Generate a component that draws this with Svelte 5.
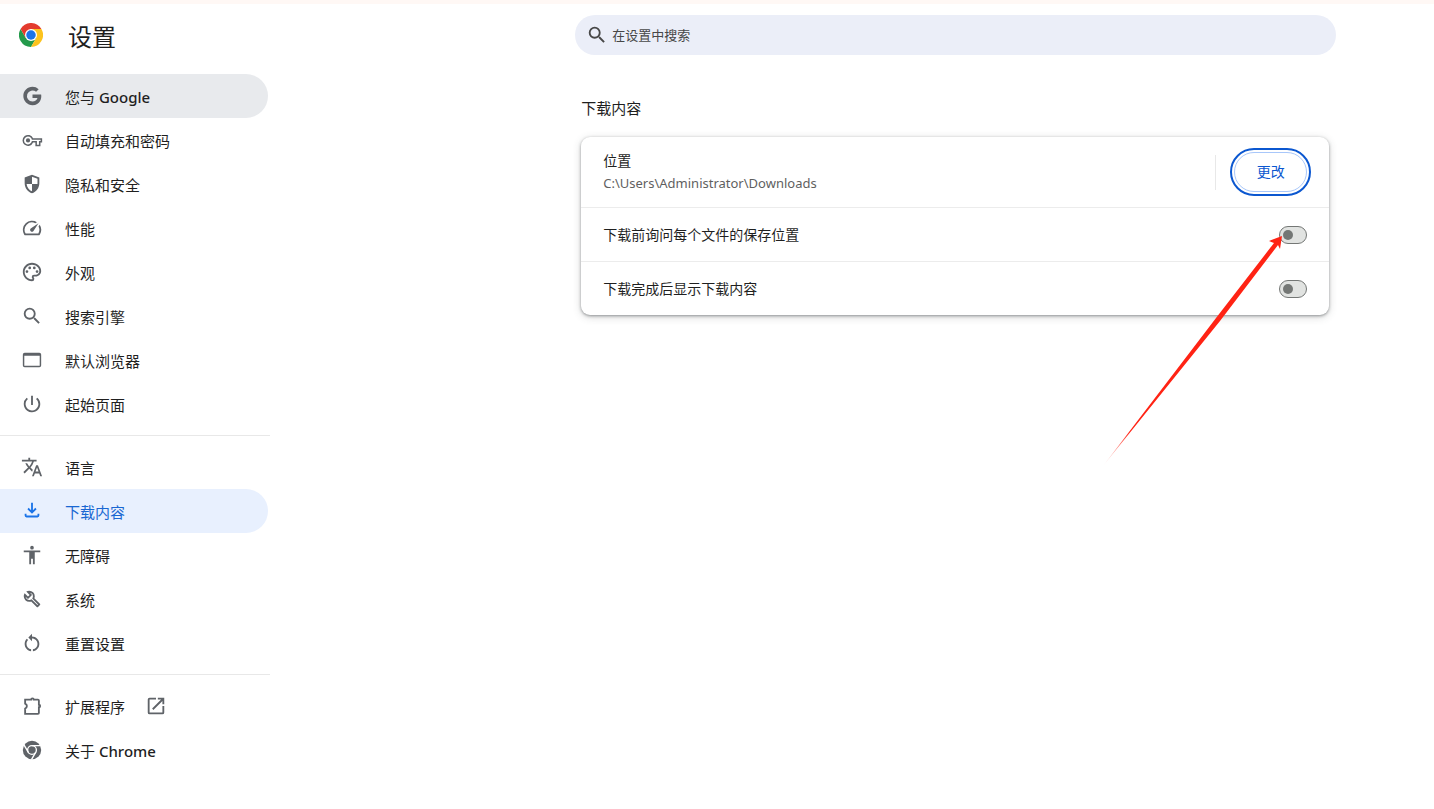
<script lang="ts">
    type Item = { label: string, latin?: string, icon: string, state?: 'hover' | 'selected', external?: boolean }

    const icons: Record<string, string> = {
        google: 'M12.545 10.239v3.821h5.445c-.712 2.315-2.647 3.972-5.445 3.972a6.032 6.032 0 1 1 3.921-10.611l2.814-2.814A9.969 9.969 0 0 0 12.545 2C7.021 2 2.543 6.477 2.543 12s4.478 10 10.002 10c8.396 0 10.249-7.850 9.426-11.748z',
        key: 'M22 18.500h-6V14h-2.700a6.500 6.500 0 1 1 0-5H24v5h-2zm-1.800-1.800V12.300h2V10.800H11.900A4.700 4.700 0 1 0 11.900 12.300H17.800v4.400zM7.300 9a2.500 2.500 0 1 1 0 5 2.500 2.500 0 0 1 0-5z',
        shield: 'M12 2l8 3v6.100c0 5-3.400 9.700-8 10.900-4.600-1.200-8-5.900-8-10.900V5zM12 4.200V12h5.900q.1-.5.1-.9V6.400zM12 12H6.100c.5 3.700 2.800 6.800 5.900 7.900z',
        speed: 'M20.380 8.570l-1.230 1.850a8 8 0 0 1-.22 7.580H5.070A8 8 0 0 1 15.580 6.850l1.850-1.230A10 10 0 0 0 3.350 19a2 2 0 0 0 1.720 1h13.850a2 2 0 0 0 1.740-1 10 10 0 0 0-.27-10.440zm-9.790 6.840a2 2 0 0 0 2.830 0l5.660-8.490-8.490 5.660a2 2 0 0 0 0 2.830z',
        palette: 'M12 22C6.490 22 2 17.510 2 12S6.490 2 12 2s10 4.040 10 9c0 3.310-2.690 6-6 6h-1.770c-.28 0-.5.22-.5.5 0 .12.05.23.13.33.41.47.64 1.060.64 1.670A2.500 2.500 0 0 1 12 22zm0-18c-4.410 0-8 3.590-8 8s3.590 8 8 8c.28 0 .5-.22.5-.5a.54.54 0 0 0-.14-.35c-.41-.46-.63-1.050-.63-1.650a2.500 2.500 0 0 1 2.500-2.500H16c2.210 0 4-1.790 4-4 0-3.860-3.590-7-8-7zM6.500 10a1.500 1.500 0 1 1 0 3 1.500 1.500 0 0 1 0-3zM9.500 6a1.500 1.500 0 1 1 0 3 1.500 1.500 0 0 1 0-3zM14.500 6a1.500 1.500 0 1 1 0 3 1.500 1.500 0 0 1 0-3zM17.500 10a1.500 1.500 0 1 1 0 3 1.500 1.500 0 0 1 0-3z',
        search: 'M15.500 14h-.79l-.28-.27A6.470 6.470 0 0 0 16 9.500 6.500 6.500 0 1 0 9.500 16c1.610 0 3.090-.59 4.230-1.570l.27.28v.79l5 4.990L20.490 19l-4.990-5zm-6 0C7.010 14 5 11.990 5 9.500S7.010 5 9.500 5 14 7.010 14 9.500 11.990 14 9.500 14z',
        browser: 'M20 4H4a2 2 0 0 0-2 2v12a2 2 0 0 0 2 2h16a2 2 0 0 0 2-2V6a2 2 0 0 0-2-2zm.4 14.400H3.600V7.300h16.800z',
        power: 'M13 3h-2v10h2V3zm4.830 2.170l-1.420 1.420A6.920 6.920 0 0 1 19 12a7 7 0 1 1-11.420-5.420L6.170 5.170A8.930 8.930 0 0 0 3 12a9 9 0 1 0 14.830-6.830z',
        translate: 'M12.870 15.070l-2.540-2.510.03-.03A17.520 17.520 0 0 0 14.070 6H17V4h-7V2H8v2H1v2h11.170C11.500 7.920 10.440 9.750 9 11.350 8.070 10.320 7.300 9.190 6.690 8h-2c.73 1.630 1.730 3.170 2.980 4.560l-5.090 5.020L4 19l5-5 3.110 3.110.76-2.040zM18.500 10h-2L12 22h2l1.120-3h4.750L21 22h2l-4.500-12zm-2.620 7l1.620-4.330L19.120 17h-3.240z',
        download: 'M12 15l-5-5 1.400-1.450 2.600 2.600V3h2v8.150l2.600-2.600L17 10zM6 19a2 2 0 0 1-2-2v-2h2v2h12v-2h2v2a2 2 0 0 1-2 2z',
        accessibility: 'M12 2a2 2 0 1 1 0 4 2 2 0 0 1 0-4zM21 9h-6v13h-2v-6h-2v6H9V9H3V7h18v2z',
        wrench: 'M686-132 444-376q-20 8-40.500 12t-43.500 4q-100 0-170-70t-70-170q0-36 10-68.500t28-61.500l146 146 72-72-146-146q29-18 61.500-28t68.500-10q100 0 170 70t70 170q0 23-4 43.500T584-516l244 242q12 12 12 29t-12 29l-84 84q-12 12-29 12t-29-12Zm29-85 27-27-256-256q18-20 26-46.500t8-53.500q0-60-38.500-104.500T386-758l74 74q12 12 12 28t-12 28L332-500q-12 12-28 12t-28-12l-74-74q9 57 53.500 95.500T360-440q26 0 53-8t47-25l255 256Z',
        reset: 'M12 5V2L8 6l4 4V7c3.310 0 6 2.690 6 6 0 2.970-2.170 5.430-5 5.910v2.020c3.950-.49 7-3.850 7-7.930 0-4.420-3.580-8-8-8zm-6 8c0-1.650.67-3.150 1.760-4.240L6.340 7.340C4.900 8.790 4 10.790 4 13c0 4.080 3.050 7.440 7 7.930v-2.020c-2.830-.48-5-2.940-5-5.910z',
        extension: 'M19.500 10V6a1 1 0 0 0-1-1h-4.600a1.400 1.400 0 0 0-2.800 0H4.500v4.300a3 3 0 0 1 0 5.600V20.500h14a1 1 0 0 0 1-1V13.400a1.400 1.400 0 0 0 0-2.800z',
        external: 'M19 19H5V5h7V3H5a2 2 0 0 0-2 2v14a2 2 0 0 0 2 2h14a2 2 0 0 0 2-2v-7h-2v7zM14 3v2h3.590l-9.830 9.830 1.410 1.410L19 6.410V10h2V3h-7z',
    }

    // icons drawn on another grid than 24x24
    const viewBoxes: Record<string, string> = {
        key: '-1 -2 26 26',
        wrench: '0 -960 960 960',
    }

    const groups: Item[][] = [
        [
            {label: '您与', latin: 'Google', icon: 'google', state: 'hover'},
            {label: '自动填充和密码', icon: 'key'},
            {label: '隐私和安全', icon: 'shield'},
            {label: '性能', icon: 'speed'},
            {label: '外观', icon: 'palette'},
            {label: '搜索引擎', icon: 'search'},
            {label: '默认浏览器', icon: 'browser'},
            {label: '起始页面', icon: 'power'},
        ],
        [
            {label: '语言', icon: 'translate'},
            {label: '下载内容', icon: 'download', state: 'selected'},
            {label: '无障碍', icon: 'accessibility'},
            {label: '系统', icon: 'wrench'},
            {label: '重置设置', icon: 'reset'},
        ],
        [
            {label: '扩展程序', icon: 'extension', external: true},
            {label: '关于', latin: 'Chrome', icon: 'chrome'},
        ],
    ]

    let query = $state('')
    let askLocation = $state(false)
    let showWhenDone = $state(false)
</script>

<div class="page">
    <aside>
        <header>
            <svg class="logo" viewBox="0 0 48 48" aria-hidden="true">
                <path fill="#249a4b" d="M3.200 12A24 24 0 0 0 24 48l10.400-18H13.600z"/>
                <path fill="#fcc31e" d="M24 12h20.800A24 24 0 0 1 24 48l10.400-18z"/>
                <path fill="#e33b2e" d="M3.200 12A24 24 0 0 1 44.800 12H24L13.600 30z"/>
                <circle cx="24" cy="24" r="12" fill="#fff"/>
                <circle cx="24" cy="24" r="9.500" fill="#1a73e8"/>
            </svg>
            <h1>设置</h1>
        </header>
        <nav>
            {#each groups as group}
                <ul>
                    {#each group as item}
                        <li>
                            <a href="#{item.icon}" class={item.state}>
                                <svg class="icon" viewBox={viewBoxes[item.icon] || '0 0 24 24'} aria-hidden="true">
                                    {#if item.icon === 'chrome'}
                                        <circle cx="12" cy="12" r="10"/>
                                        <g fill="none" stroke="#fff" stroke-width="1.500">
                                            <circle cx="12" cy="12" r="4.800"/>
                                            <path d="M12 7.200h9.500M7.840 14.400L3.100 6.200M16.160 14.400L11.400 22.600"/>
                                        </g>
                                    {:else}
                                        <path class:outline={item.icon === 'extension'} fill-rule="evenodd" d={icons[item.icon]}/>
                                    {/if}
                                </svg>
                                <span>{item.label}{#if item.latin}{' '}<b>{item.latin}</b>{/if}</span>
                                {#if item.external}
                                    <svg class="icon" viewBox="0 0 24 24" aria-hidden="true"><path d={icons.external}/></svg>
                                {/if}
                            </a>
                        </li>
                    {/each}
                </ul>
            {/each}
        </nav>
    </aside>

    <main>
        <label class="search">
            <svg class="icon" viewBox="0 0 24 24" aria-hidden="true"><path d={icons.search}/></svg>
            <input type="search" placeholder="在设置中搜索" aria-label="在设置中搜索" bind:value={query}>
        </label>

        <section>
            <h2>下载内容</h2>
            <div class="card">
                <div class="row location">
                    <div class="text">
                        <div>位置</div>
                        <div class="secondary">C:\Users\Administrator\Downloads</div>
                    </div>
                    <div class="action">
                        <button>更改</button>
                    </div>
                </div>
                <label class="row">
                    <span class="text">下载前询问每个文件的保存位置</span>
                    <input type="checkbox" role="switch" bind:checked={askLocation}>
                </label>
                <label class="row">
                    <span class="text">下载完成后显示下载内容</span>
                    <input type="checkbox" role="switch" bind:checked={showWhenDone}>
                </label>

                <svg class="pointer" viewBox="0 0 180 232" aria-hidden="true">
                    <defs>
                        <linearGradient id="tail" x1="0" y1="1" x2="1" y2="0">
                            <stop offset="0" stop-color="#ff2314" stop-opacity="0"/>
                            <stop offset="0.150" stop-color="#ff2314"/>
                        </linearGradient>
                    </defs>
                    <path fill="url(#tail)" d="M0 231L113 83 171 8l-5-2L179 1l-2 13-2-4L117 86z"/>
                </svg>
            </div>
        </section>
    </main>
</div>

<style>
    :global(body) {
        background: #fff;
    }

    .page {
        display: grid;
        grid-template-columns: 33.3% 1fr;
        border-top: 4px solid #fff8f5;
        color: #1f1f1f;
        font-family: "Noto Sans", "Noto Sans CJK SC", sans-serif;
        font-size: 14px;
        line-height: 20px;
    }

    aside {
        width: 270px;
    }

    header {
        display: flex;
        align-items: center;
        gap: 25px;
        height: 62px;
        padding: 0 19px 8px;
    }

    .logo {
        width: 24px;
        height: 24px;
    }

    h1 {
        margin: 4px 0 0;
        font-size: 24px;
        font-weight: 400;
        line-height: 32px;
    }

    ul {
        margin: 0;
        padding: 0;
        list-style: none;
    }

    ul + ul {
        margin-top: 9px;
        padding-top: 9px;
        border-top: 1px solid #e8e8e8;
    }

    nav a {
        display: flex;
        align-items: center;
        height: 44px;
        margin-right: 2px;
        padding-left: 21px;
        border-radius: 0 22px 22px 0;
        color: #1f1f1f;
        font-size: 15px;
        text-decoration: none;
    }

    nav span {
        margin: 1px 20px 0 22px;
    }

    nav b {
        font-weight: 500;
    }

    .hover {
        background: #e8eaed;
    }

    .selected {
        background: #e8f0fe;
        color: #1967d2;
    }

    .icon {
        flex: none;
        width: 22px;
        height: 22px;
        fill: #5f6368;
    }

    .selected .icon {
        fill: #1a73e8;
    }

    .outline {
        fill: none;
        stroke: #5f6368;
        stroke-width: 2;
    }

    main {
        width: 761px;
        max-width: 100%;
        justify-self: center;
    }

    .search {
        display: flex;
        align-items: center;
        gap: 4px;
        height: 40px;
        margin-top: 11px;
        padding: 0 11px;
        border-radius: 20px;
        background: #ebeef8;
    }

    .search .icon {
        fill: #474747;
    }

    .search input {
        flex: 1;
        padding: 0;
        border: none;
        outline: none;
        background: none;
        font: inherit;
        font-size: 13px;
    }

    .search input::placeholder {
        color: #474747;
        opacity: 1;
    }

    section {
        padding: 0 7px 0 6px;
    }

    h2 {
        margin: 43px 0 19px;
        font-size: 15px;
        font-weight: 400;
        line-height: 20px;
    }

    .card {
        position: relative;
        border-radius: 9px;
        background: #fff;
        box-shadow: 0 1px 3px rgba(60, 64, 67, .5), 0 2px 8px rgba(60, 64, 67, .2);
    }

    .row {
        display: flex;
        align-items: center;
        min-height: 53px;
        padding: 0 22px;
    }

    .row + .row {
        border-top: 1px solid #ececec;
    }

    .location {
        min-height: 70px;
    }

    .text {
        flex: 1;
    }

    .secondary {
        margin-top: 2px;
        color: #5f5f5f;
        font-size: 13px;
    }

    .action {
        display: flex;
        align-items: center;
    }

    .action::before {
        content: "";
        width: 1px;
        height: 35px;
        margin-right: 18px;
        background: #e8e8e8;
    }

    button {
        min-width: 73px;
        height: 40px;
        padding: 0 20px;
        border: 1px solid #a8c7fa;
        border-radius: 20px;
        outline: 2px solid #0b57d0;
        outline-offset: 2px;
        background: #fff;
        color: #0b57d0;
        font: inherit;
    }

    input[type="checkbox"] {
        appearance: none;
        display: flex;
        align-items: center;
        width: 28px;
        height: 18px;
        margin: 0;
        padding: 0 3px;
        box-sizing: border-box;
        border: 1px solid #747775;
        border-radius: 9px;
        background: #e1e3e1;
    }

    input[type="checkbox"]::before {
        content: "";
        width: 10px;
        height: 10px;
        border-radius: 50%;
        background: #747775;
    }

    input[type="checkbox"]:checked {
        justify-content: flex-end;
        background: #a8c7fa;
    }

    .pointer {
        position: absolute;
        top: 98px;
        right: 46px;
        width: 180px;
        height: 232px;
        pointer-events: none;
    }
</style>
